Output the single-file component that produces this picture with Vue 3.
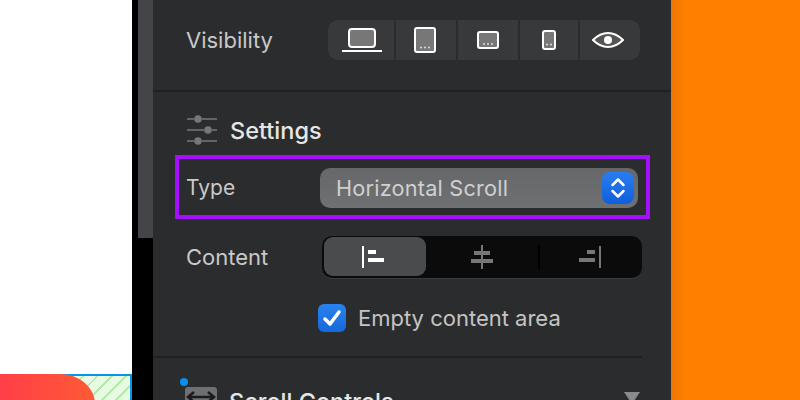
<script setup>
const devices = [
  { id: 'laptop', w: 66 },
  { id: 'tablet', w: 60 },
  { id: 'wide', w: 60 },
  { id: 'phone', w: 58 },
  { id: 'eye', w: 60 },
]
</script>

<template>
  <div class="page">
    <div class="canvas">
      <div class="blank"></div>
      <div class="frame">
        <div class="blob"></div>
      </div>
    </div>
    <div class="gutter">
      <div class="thumb"></div>
    </div>
    <div class="panel">
      <div class="row visibility">
        <span class="label">Visibility</span>
        <div class="devices">
          <div v-for="d in devices" :key="d.id" class="device" :class="'device-' + d.id" :style="{ width: d.w + 'px' }">
            <svg v-if="d.id === 'laptop'" width="40" height="24" viewBox="0 0 40 24">
              <rect x="7" y="1" width="26" height="18" rx="3" fill="#777" stroke="#fff" stroke-width="2" />
              <rect x="0" y="22" width="40" height="2" fill="#fff" />
            </svg>
            <svg v-else-if="d.id === 'tablet'" width="22" height="26" viewBox="0 0 22 26">
              <rect x="1" y="1" width="20" height="24" rx="2" fill="#777" stroke="#fff" stroke-width="2" />
              <circle cx="7" cy="20.500" r="1" fill="#ddd" /><circle cx="11" cy="20.500" r="1" fill="#ddd" /><circle cx="15" cy="20.500" r="1" fill="#ddd" />
            </svg>
            <svg v-else-if="d.id === 'wide'" width="22" height="18" viewBox="0 0 22 18">
              <rect x="1" y="1" width="20" height="16" rx="2" fill="#777" stroke="#fff" stroke-width="2" />
              <circle cx="7" cy="13" r="1" fill="#ddd" /><circle cx="11" cy="13" r="1" fill="#ddd" /><circle cx="15" cy="13" r="1" fill="#ddd" />
            </svg>
            <svg v-else-if="d.id === 'phone'" width="14" height="20" viewBox="0 0 14 20">
              <rect x="1" y="1" width="12" height="18" rx="2" fill="#777" stroke="#fff" stroke-width="2" />
              <circle cx="5" cy="14.500" r="1" fill="#ddd" /><circle cx="9" cy="14.500" r="1" fill="#ddd" />
            </svg>
            <svg v-else width="32" height="16" viewBox="0 0 32 16">
              <path d="M1 8 C6 3 11 1 16 1 C21 1 26 3 31 8 C26 13 21 15 16 15 C11 15 6 13 1 8 Z" fill="#555" stroke="#fff" stroke-width="2" />
              <circle cx="16" cy="8" r="4" fill="#fff" />
            </svg>
          </div>
        </div>
      </div>
      <div class="divider full"></div>

      <div class="settings-head">
        <svg width="30" height="30" viewBox="0 0 30 30" class="sliders">
          <g stroke="#777" stroke-width="1.500">
            <path d="M0 4h7M15 4h15M0 15h17M25 15h5M0 26h7M15 26h15" />
          </g>
          <g fill="#777">
            <circle cx="11" cy="4" r="3.800" /><circle cx="21" cy="15" r="3.800" /><circle cx="11" cy="26" r="3.800" />
          </g>
        </svg>
        <span class="title">Settings</span>
      </div>

      <div class="type-box">
        <span class="label type-label">Type</span>
        <div class="select">
          <span class="select-text">Horizontal Scroll</span>
          <div class="stepper">
            <svg width="16" height="24" viewBox="0 0 16 24">
              <path d="M2.500 9 L8 3.500 L13.500 9 M2.500 15 L8 20.500 L13.500 15" fill="none" stroke="#fff" stroke-width="2.500" stroke-linecap="round" stroke-linejoin="round" />
            </svg>
          </div>
        </div>
      </div>

      <div class="row content">
        <span class="label">Content</span>
        <div class="seg">
          <div class="seg-item active">
            <svg width="22" height="22" viewBox="0 0 22 22">
              <path d="M1 0v22" stroke="#fff" stroke-width="2" />
              <rect x="6" y="4" width="8" height="4" fill="#fff" /><rect x="6" y="12" width="16" height="4" fill="#fff" />
            </svg>
          </div>
          <div class="seg-item mid">
            <svg width="22" height="24" viewBox="0 0 22 24">
              <path d="M11 0v24" stroke="#777" stroke-width="2" />
              <rect x="3" y="6" width="16" height="4" fill="#777" /><rect x="0" y="14" width="22" height="4" fill="#777" />
            </svg>
          </div>
          <div class="seg-sep"></div>
          <div class="seg-item">
            <svg width="22" height="22" viewBox="0 0 22 22">
              <path d="M21 0v22" stroke="#777" stroke-width="2" />
              <rect x="8" y="4" width="8" height="4" fill="#777" /><rect x="0" y="12" width="16" height="4" fill="#777" />
            </svg>
          </div>
        </div>
      </div>

      <label class="check-row">
        <span class="check">
          <svg width="20" height="18" viewBox="0 0 20 18">
            <path d="M3 10 L8 15 L17 3" fill="none" stroke="#fff" stroke-width="3.500" stroke-linecap="round" stroke-linejoin="round" />
          </svg>
        </span>
        <span class="check-text">Empty content area</span>
      </label>
      <div class="divider short"></div>

      <div class="scroll-head">
        <span class="dot"></span>
        <span class="scroll-icon">
          <svg width="32" height="26" viewBox="0 0 32 26">
            <path d="M3 10h26M9 5l-6 5 6 5M23 5l6 5-6 5" fill="none" stroke="#1c1c1e" stroke-width="2.500" />
          </svg>
        </span>
        <span class="title">Scroll Controls</span>
        <span class="tri"></span>
      </div>
    </div>
    <div class="orange"></div>
  </div>
</template>

<style scoped>
.page {
  width: 800px;
  height: 400px;
  overflow: hidden;
  display: grid;
  grid-template-columns: 132px 21px 518px 129px;
  font-family: Inter, "Liberation Sans", sans-serif;
}
.canvas {
  display: flex;
  flex-direction: column;
  background: #fff;
  overflow: hidden;
}
.blank { height: 374px; flex: none; }
.frame {
  position: relative;
  flex: 1;
  border-top: 2px solid #0a94e8;
  border-right: 2px solid #0a94e8;
  background: repeating-linear-gradient(135deg, #e8f9e4 0 8px, #b5eaa9 8px 10px);
}
.blob {
  position: absolute;
  left: 0;
  top: -2px;
  width: 95px;
  height: 60px;
  border-top-right-radius: 35px 30px;
  background: linear-gradient(90deg, #ff3f48, #ff5a35);
}
.gutter {
  background: #000;
  display: flex;
  justify-content: flex-end;
}
.thumb {
  width: 15px;
  height: 238px;
  background: #444548;
}
.panel {
  background: #2b2c2e;
  display: flex;
  flex-direction: column;
  color: #ddd;
  overflow: hidden;
}
.panel > * { flex: none; }
.row {
  display: flex;
  align-items: center;
}
.visibility {
  padding: 20px 31px 0 33px;
  justify-content: space-between;
}
.label {
  font-size: 22px;
  color: #c9c9c9;
}
.devices {
  display: flex;
  gap: 2px;
  height: 40px;
  border-radius: 10px;
  overflow: hidden;
}
.device {
  background: #38393b;
  display: flex;
  align-items: center;
  justify-content: center;
  box-sizing: border-box;
}
.device-laptop { padding-left: 2px; }
.device-tablet { padding-right: 2px; }
.device-eye { padding-right: 4px; }
.divider {
  height: 2px;
  background: #1f2022;
}
.full { margin-top: 30px; }
.short { margin: 24px 29px 0 0; }
.settings-head {
  display: flex;
  align-items: center;
  gap: 13px;
  padding: 23px 0 0 34px;
  height: 30px;
}
.title {
  font-size: 23.500px;
  font-weight: 500;
  color: #e6e6e6;
}
.type-box {
  margin: 10px 21px 0 22px;
  height: 64px;
  box-sizing: border-box;
  border: 4px solid #a50fff;
  display: flex;
  align-items: center;
  padding: 1px 8px 0 7px;
}
.type-box .label { font-size: 21px; }
.type-label { width: 134px; }
.select {
  flex: 1;
  height: 40px;
  border-radius: 10px;
  background: linear-gradient(#66676a, #6f7072);
  display: flex;
  align-items: center;
  justify-content: space-between;
  padding: 0 4px 0 16px;
}
.select-text {
  font-size: 21.700px;
  color: #d0d0d0;
  letter-spacing: 0.2px;
}
.stepper {
  width: 32px;
  height: 32px;
  border-radius: 8px;
  background: linear-gradient(#2a7df0, #0f5fdc);
  display: flex;
  align-items: center;
  justify-content: center;
}
.content {
  margin-top: 17px;
  padding: 0 29px 0 33px;
  justify-content: space-between;
}
.seg {
  width: 320px;
  height: 42px;
  box-sizing: border-box;
  background: #0b0b0c;
  border-radius: 10px;
  box-shadow: 0 1px 0 #3a3b3d;
  padding: 1px 2px 2px;
  display: flex;
  align-items: center;
}
.seg-item {
  flex: 1;
  height: 39px;
  border-radius: 9px;
  display: flex;
  align-items: center;
  justify-content: center;
}
.seg-item.active {
  flex: none;
  width: 102px;
  background: #4a4b4d;
  padding-right: 4px;
  box-sizing: border-box;
}
.seg-item.mid {
  flex: none;
  width: 112px;
}
.seg-sep {
  width: 2px;
  height: 24px;
  background: #000;
}
.check-row {
  margin: 26px 0 0 165px;
  display: flex;
  align-items: center;
  gap: 12px;
  height: 28px;
}
.check {
  width: 28px;
  height: 28px;
  border-radius: 6px;
  background: linear-gradient(#2a82ee, #1668dc);
  display: flex;
  align-items: center;
  justify-content: center;
}
.check-text {
  font-size: 22px;
  color: #c4c4c4;
}
.scroll-head {
  position: relative;
  display: flex;
  align-items: flex-start;
  gap: 12px;
  padding: 29px 31px 0 32px;
}
.dot {
  position: absolute;
  left: 27px;
  top: 20px;
  width: 8px;
  height: 8px;
  border-radius: 50%;
  background: #0a8ff0;
}
.scroll-icon {
  width: 32px;
  height: 26px;
  border-radius: 3px;
  background: #6e6f71;
  display: flex;
}
.tri {
  margin-left: auto;
  margin-top: 5px;
  border-left: 8px solid transparent;
  border-right: 8px solid transparent;
  border-top: 12px solid #8a8a8a;
}
.orange {
  background: linear-gradient(90deg, #ee7600, #ff7f00 14px);
}
</style>
